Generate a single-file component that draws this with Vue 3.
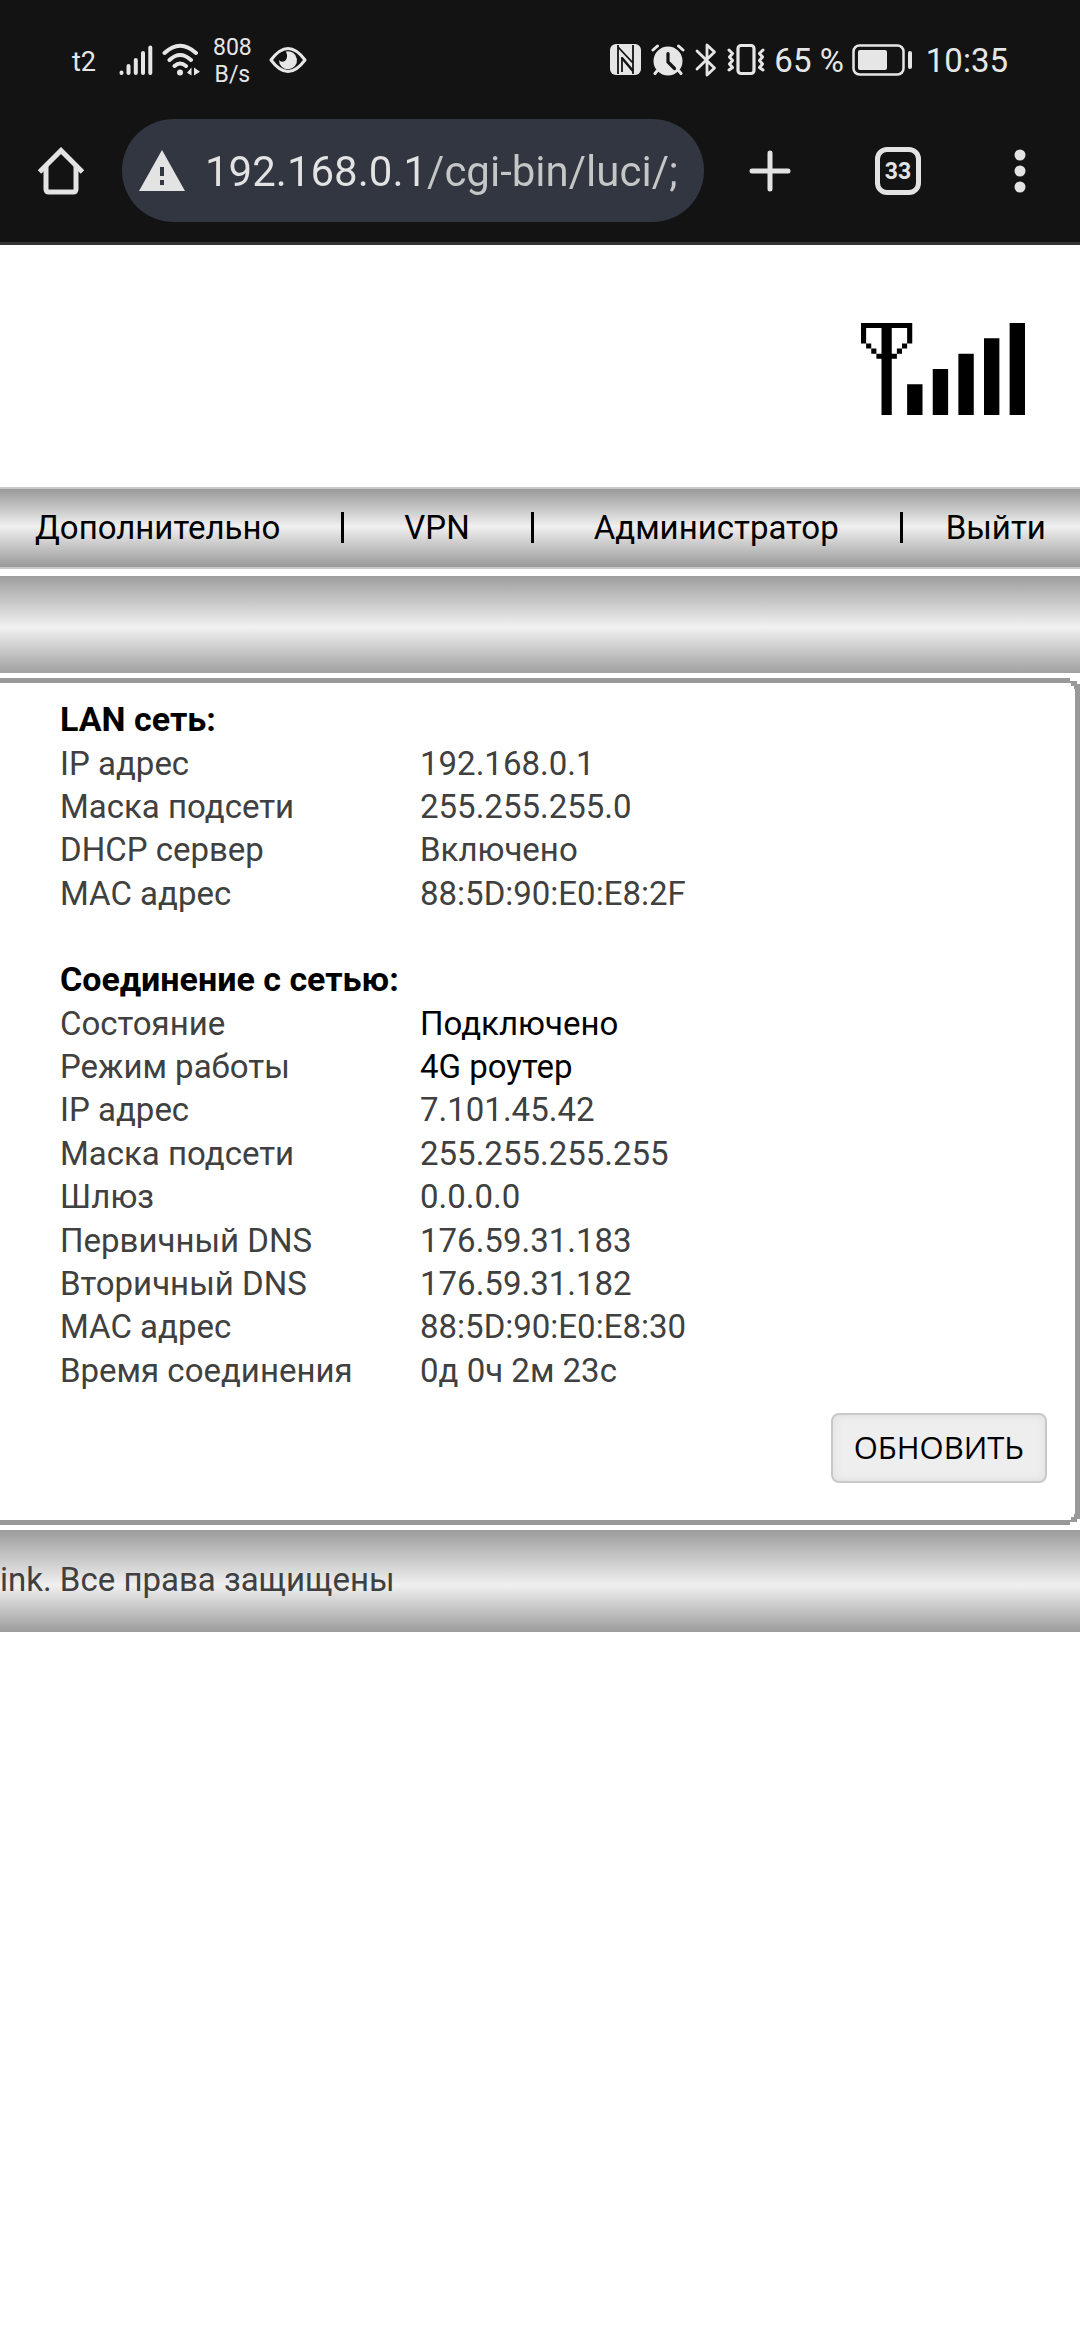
<script setup>
import { ref } from 'vue'

const address = ref('192.168.0.1/cgi-bin/luci/;')

const menu = ['Дополнительно', 'VPN', 'Администратор', 'Выйти']

const sections = [
  {
    id: 'lan',
    title: 'LAN сеть:',
    rows: [
      { label: 'IP адрес', value: '192.168.0.1' },
      { label: 'Маска подсети', value: '255.255.255.0' },
      { label: 'DHCP сервер', value: 'Включено' },
      { label: 'MAC адрес', value: '88:5D:90:E0:E8:2F' },
    ],
  },
  {
    id: 'wan',
    title: 'Соединение с сетью:',
    rows: [
      { label: 'Состояние', value: 'Подключено', strong: true },
      { label: 'Режим работы', value: '4G роутер', strong: true },
      { label: 'IP адрес', value: '7.101.45.42' },
      { label: 'Маска подсети', value: '255.255.255.255' },
      { label: 'Шлюз', value: '0.0.0.0' },
      { label: 'Первичный DNS', value: '176.59.31.183' },
      { label: 'Вторичный DNS', value: '176.59.31.182' },
      { label: 'MAC адрес', value: '88:5D:90:E0:E8:30' },
      { label: 'Время соединения', value: '0д 0ч 2м 23с' },
    ],
  },
]
</script>

<template>
  <div class="screen">
    <header class="chrome">
      <div class="status">
        <div class="status-left">
          <span class="carrier">t2</span>
          <svg class="bars" width="34" height="32" viewBox="0 0 34 32" fill="none" stroke="#e6e6e6" stroke-width="4" stroke-linecap="round">
            <path d="M2.500 28.500V29M9.500 22V29M16.800 16V29M24 9V29M31.300 3.500V29" />
          </svg>
          <svg class="wifi" width="38" height="34" viewBox="0 0 38 34" fill="none" stroke="#e6e6e6" stroke-width="4" stroke-linecap="round">
            <path d="M2.500 10Q18 -4.500 34 10M7.500 17Q18 7 29 17M12.500 23Q18 18 24 23" />
            <circle cx="18" cy="29.500" r="3" fill="#e6e6e6" stroke="none" />
            <path d="M29.500 24.500V32.500L25 29.800Z M32 32.500V24.500L38 28.800Z" fill="#e6e6e6" stroke="none" />
          </svg>
          <span class="speed">808<br />B/s</span>
          <svg class="eye" width="38" height="28" viewBox="0 0 38 28">
            <path d="M2 14Q19 -9 36 14Q19 37 2 14Z" fill="none" stroke="#e6e6e6" stroke-width="3" stroke-linejoin="round" />
            <path d="M17 5.500A9 9 0 1 1 10 14Q12 17 16 15Q19.500 12 17 5.500Z" fill="#e6e6e6" />
          </svg>
        </div>
        <div class="status-right">
          <svg width="31" height="31" viewBox="0 0 31 31">
            <rect width="31" height="31" rx="6" fill="#e6e6e6" />
            <path d="M8 1V30M23 1V30M8 3L23 19M12 13V28" fill="none" stroke="#131313" stroke-width="1.800" />
            <path d="M12 14L23 27" fill="none" stroke="#131313" stroke-width="2.500" />
          </svg>
          <svg class="alarm" width="34" height="32" viewBox="0 0 34 32">
            <circle cx="17" cy="17" r="14.500" fill="#e6e6e6" />
            <path d="M2 6L6.500 2M32 6L27.500 2M6 27L4 29.500M28 27L30 29.500" stroke="#e6e6e6" stroke-width="3" stroke-linecap="round" />
            <path d="M17 9.500V18L23.500 24.500" fill="none" stroke="#131313" stroke-width="3.200" stroke-linecap="round" />
          </svg>
          <svg class="bt" width="22" height="34" viewBox="0 0 22 34" fill="none" stroke="#e6e6e6" stroke-width="2.800" stroke-linecap="round" stroke-linejoin="round">
            <path d="M2 8L19.500 25L12 32V2L19.500 9L2 26" />
          </svg>
          <svg class="vibrate" width="38" height="32" viewBox="0 0 38 32" fill="none" stroke="#e6e6e6">
            <rect x="11" y="1.500" width="16" height="28" rx="3" stroke-width="3.200" />
            <path d="M2 6L5.500 9.500L2.500 13L5.500 16.500L2.500 20L5.500 23.500L2 26M36 6L32.500 9.500L35.500 13L32.500 16.500L35.500 20L32.500 23.500L36 26" stroke-width="3" stroke-linecap="round" stroke-linejoin="round" />
          </svg>
          <span class="digits percent">65 %</span>
          <svg class="battery" width="60" height="32" viewBox="0 0 60 32">
            <rect x="1.500" y="1.500" width="50" height="29" rx="6" fill="none" stroke="#e6e6e6" stroke-width="2.500" />
            <rect x="6" y="6" width="29" height="20" rx="2" fill="#e6e6e6" />
            <rect x="56" y="7" width="4" height="18" rx="2" fill="#e6e6e6" />
          </svg>
          <span class="digits clock">10:35</span>
        </div>
      </div>

      <div class="toolbar">
        <button class="icon-button" type="button" aria-label="Домой">
          <svg width="46" height="48" viewBox="0 0 46 48" fill="none" stroke="#e3e3e3" stroke-width="5">
            <path d="M1.500 25L23 3.500L44.500 25" />
            <path d="M8 19V42Q8 45 11 45H35Q38 45 38 42V19" />
          </svg>
        </button>
        <form class="omnibox" @submit.prevent>
          <svg width="46" height="41" viewBox="0 0 46 41">
            <path d="M23 0L46 41H0Z" fill="#e3e3e3" />
            <path d="M21 17H25V26H21ZM21 30H25V35H21Z" fill="#313641" />
          </svg>
          <input v-model="address" class="address" type="text" aria-label="Адрес" />
        </form>
        <button class="icon-button new-tab" type="button" aria-label="Новая вкладка">
          <svg width="42" height="42" viewBox="0 0 42 42" stroke="#e3e3e3" stroke-width="5" stroke-linecap="round">
            <path d="M21 3V39M3 21H39" />
          </svg>
        </button>
        <button class="tabs" type="button">33</button>
        <button class="icon-button more" type="button" aria-label="Меню">
          <svg width="12" height="44" viewBox="0 0 12 44" fill="#e3e3e3">
            <circle cx="6" cy="6" r="5.500" />
            <circle cx="6" cy="22" r="5.500" />
            <circle cx="6" cy="38" r="5.500" />
          </svg>
        </button>
      </div>
    </header>

    <main class="page">
      <div class="banner">
        <svg width="164" height="92" viewBox="0 0 32 18" preserveAspectRatio="none" fill="#000">
          <path d="M0 0H10V4H9V5H8V6H7V7H6V18H4V7H3V6H2V5H1V4H0ZM1 1V4H2V5H3V6H4V1ZM6 1V6H7V5H8V4H9V1Z" fill-rule="evenodd" />
          <path d="M9 12H12V18H9ZM14 9H17V18H14ZM19 6H22V18H19ZM24 3H27V18H24ZM29 0H32V18H29Z" />
        </svg>
      </div>

      <nav class="menu">
        <ul>
          <li v-for="item in menu" :key="item"><a href="#">{{ item }}</a></li>
        </ul>
      </nav>

      <div class="submenu"></div>

      <section class="panel">
        <svg class="corner corner-top" width="14" height="12" viewBox="0 0 14 12">
          <path d="M0 0H14V12H0Z" fill="#fff" />
          <path d="M0 1H4V4H11V7H14V12H8V9H5V6H0Z" fill="#999" />
        </svg>
        <svg class="corner corner-bottom" width="14" height="12" viewBox="0 0 14 12">
          <path d="M0 0H14V12H0Z" fill="#fff" />
          <path d="M0 11H4V8H11V5H14V0H8V3H5V6H0Z" fill="#999" />
        </svg>

        <table v-for="section in sections" :key="section.id" :class="['info', section.id]">
          <colgroup>
            <col class="label-column" />
            <col />
          </colgroup>
          <tbody>
            <tr>
              <th colspan="2" scope="colgroup">{{ section.title }}</th>
            </tr>
            <tr v-for="row in section.rows" :key="row.label">
              <td>{{ row.label }}</td>
              <td :class="{ strong: row.strong }">{{ row.value }}</td>
            </tr>
          </tbody>
        </table>

        <div class="actions">
          <button class="refresh" type="button">ОБНОВИТЬ</button>
        </div>
      </section>

      <footer class="footer">ink. Все права защищены</footer>
    </main>
  </div>
</template>

<style>
body {
  margin: 0;
  background: #fff;
}
</style>

<style scoped>
.screen {
  min-height: 100vh;
  font-family: Roboto, "Noto Sans", sans-serif;
  font-size: 33px;
  color: #404040;
  overflow-x: hidden;
}

svg {
  display: block;
  flex: none;
}

button {
  margin: 0;
  padding: 0;
  border: 0;
  background: none;
  font-family: inherit;
}

.chrome {
  background: #131313;
  border-bottom: 3px solid #333;
  color: #e6e6e6;
}

.status {
  display: flex;
  justify-content: space-between;
  align-items: center;
  height: 119px;
  padding: 0 72px;
}

.status-left,
.status-right {
  display: flex;
  align-items: center;
}

.carrier {
  font-size: 27px;
  line-height: 32px;
  margin: 4px 23px 0 0;
}

.wifi {
  margin-left: 9px;
}

.speed {
  margin: 2px 17px 0 13px;
  font-size: 23px;
  line-height: 27px;
  text-align: center;
}

.alarm,
.bt,
.vibrate {
  margin-left: 10px;
}

.digits {
  font-size: 33px;
  line-height: 40px;
}

.percent {
  margin: 2px 8px 0 9px;
}

.clock {
  margin: 2px 0 0 14px;
}

.toolbar {
  display: flex;
  align-items: center;
  height: 103px;
  padding: 0 54px 20px 38px;
}

.icon-button,
.tabs {
  flex: none;
}

.omnibox {
  display: flex;
  align-items: center;
  flex: 1;
  min-width: 0;
  height: 103px;
  margin-left: 38px;
  padding: 0 17px;
  border-radius: 52px;
  background: #313641;
  box-sizing: border-box;
}

.address {
  flex: 1;
  min-width: 0;
  height: 60px;
  margin-left: 20px;
  padding: 2px 0 0;
  border: 0;
  outline: 0;
  font-family: inherit;
  font-size: 42px;
  color: transparent;
  background: linear-gradient(90deg, #e3e3e3 222px, #c4c7c5 222px);
  background-clip: text;
}

.new-tab {
  margin-left: 45px;
}

.tabs {
  width: 46px;
  height: 48px;
  margin-left: 84px;
  border: 5px solid #e3e3e3;
  border-radius: 12px;
  color: #e3e3e3;
  font-size: 23px;
  line-height: 40px;
  font-weight: 700;
}

.more {
  margin-left: 93px;
}

.banner {
  display: flex;
  justify-content: flex-end;
  padding: 78px 55px 72px;
}

.menu {
  border: solid #c8c8c8;
  border-width: 2px 0;
  background: linear-gradient(#999, #f0f0f0 48%, #999);
}

.menu ul {
  display: flex;
  align-items: center;
  height: 76px;
  margin: 0;
  padding: 0 0 2px 35px;
  list-style: none;
}

.menu li {
  padding-right: 61px;
  line-height: 31px;
}

.menu li + li {
  padding-left: 60px;
  border-left: 3px solid #000;
}

.menu li:last-child {
  padding: 0 0 0 43px;
}

.menu a {
  color: #000;
  text-decoration: none;
}

.submenu {
  height: 97px;
  margin-top: 7px;
  background: linear-gradient(#9e9e9e, #f1f1f1 53%, #a0a0a0);
}

.panel {
  position: relative;
  margin-top: 5px;
  padding: 15px 28px 37px 60px;
  border: solid #999;
  border-width: 5px 5px 5px 0;
}

.corner {
  position: absolute;
  right: -5px;
}

.corner-top {
  top: -6px;
}

.corner-bottom {
  bottom: -6px;
}

.info {
  width: 100%;
  border-collapse: collapse;
  table-layout: fixed;
  line-height: 43px;
}

.info.lan {
  height: 217px;
}

.info.wan {
  height: 434px;
  margin-top: 43px;
}

.label-column {
  width: 360px;
}

.info th,
.info td {
  padding: 0;
  text-align: left;
}

.info th {
  color: #000;
  font-size: 34px;
  font-weight: 700;
}

.info .strong {
  color: #000;
}

.actions {
  display: flex;
  justify-content: flex-end;
  margin-top: 21px;
}

.refresh {
  height: 70px;
  padding: 0 21px 2px;
  border: 2px solid #c8c8c8;
  border-radius: 8px;
  background: #eee;
  box-shadow: inset 0 0 10px #ddd;
  color: #000;
  font-family: "Open Sans", "Noto Sans", sans-serif;
  font-size: 31px;
}

.footer {
  margin-top: 5px;
  padding-bottom: 2px;
  line-height: 100px;
  background: linear-gradient(#9c9c9c, #f0f0f0 54%, #9c9c9c);
}
</style>
